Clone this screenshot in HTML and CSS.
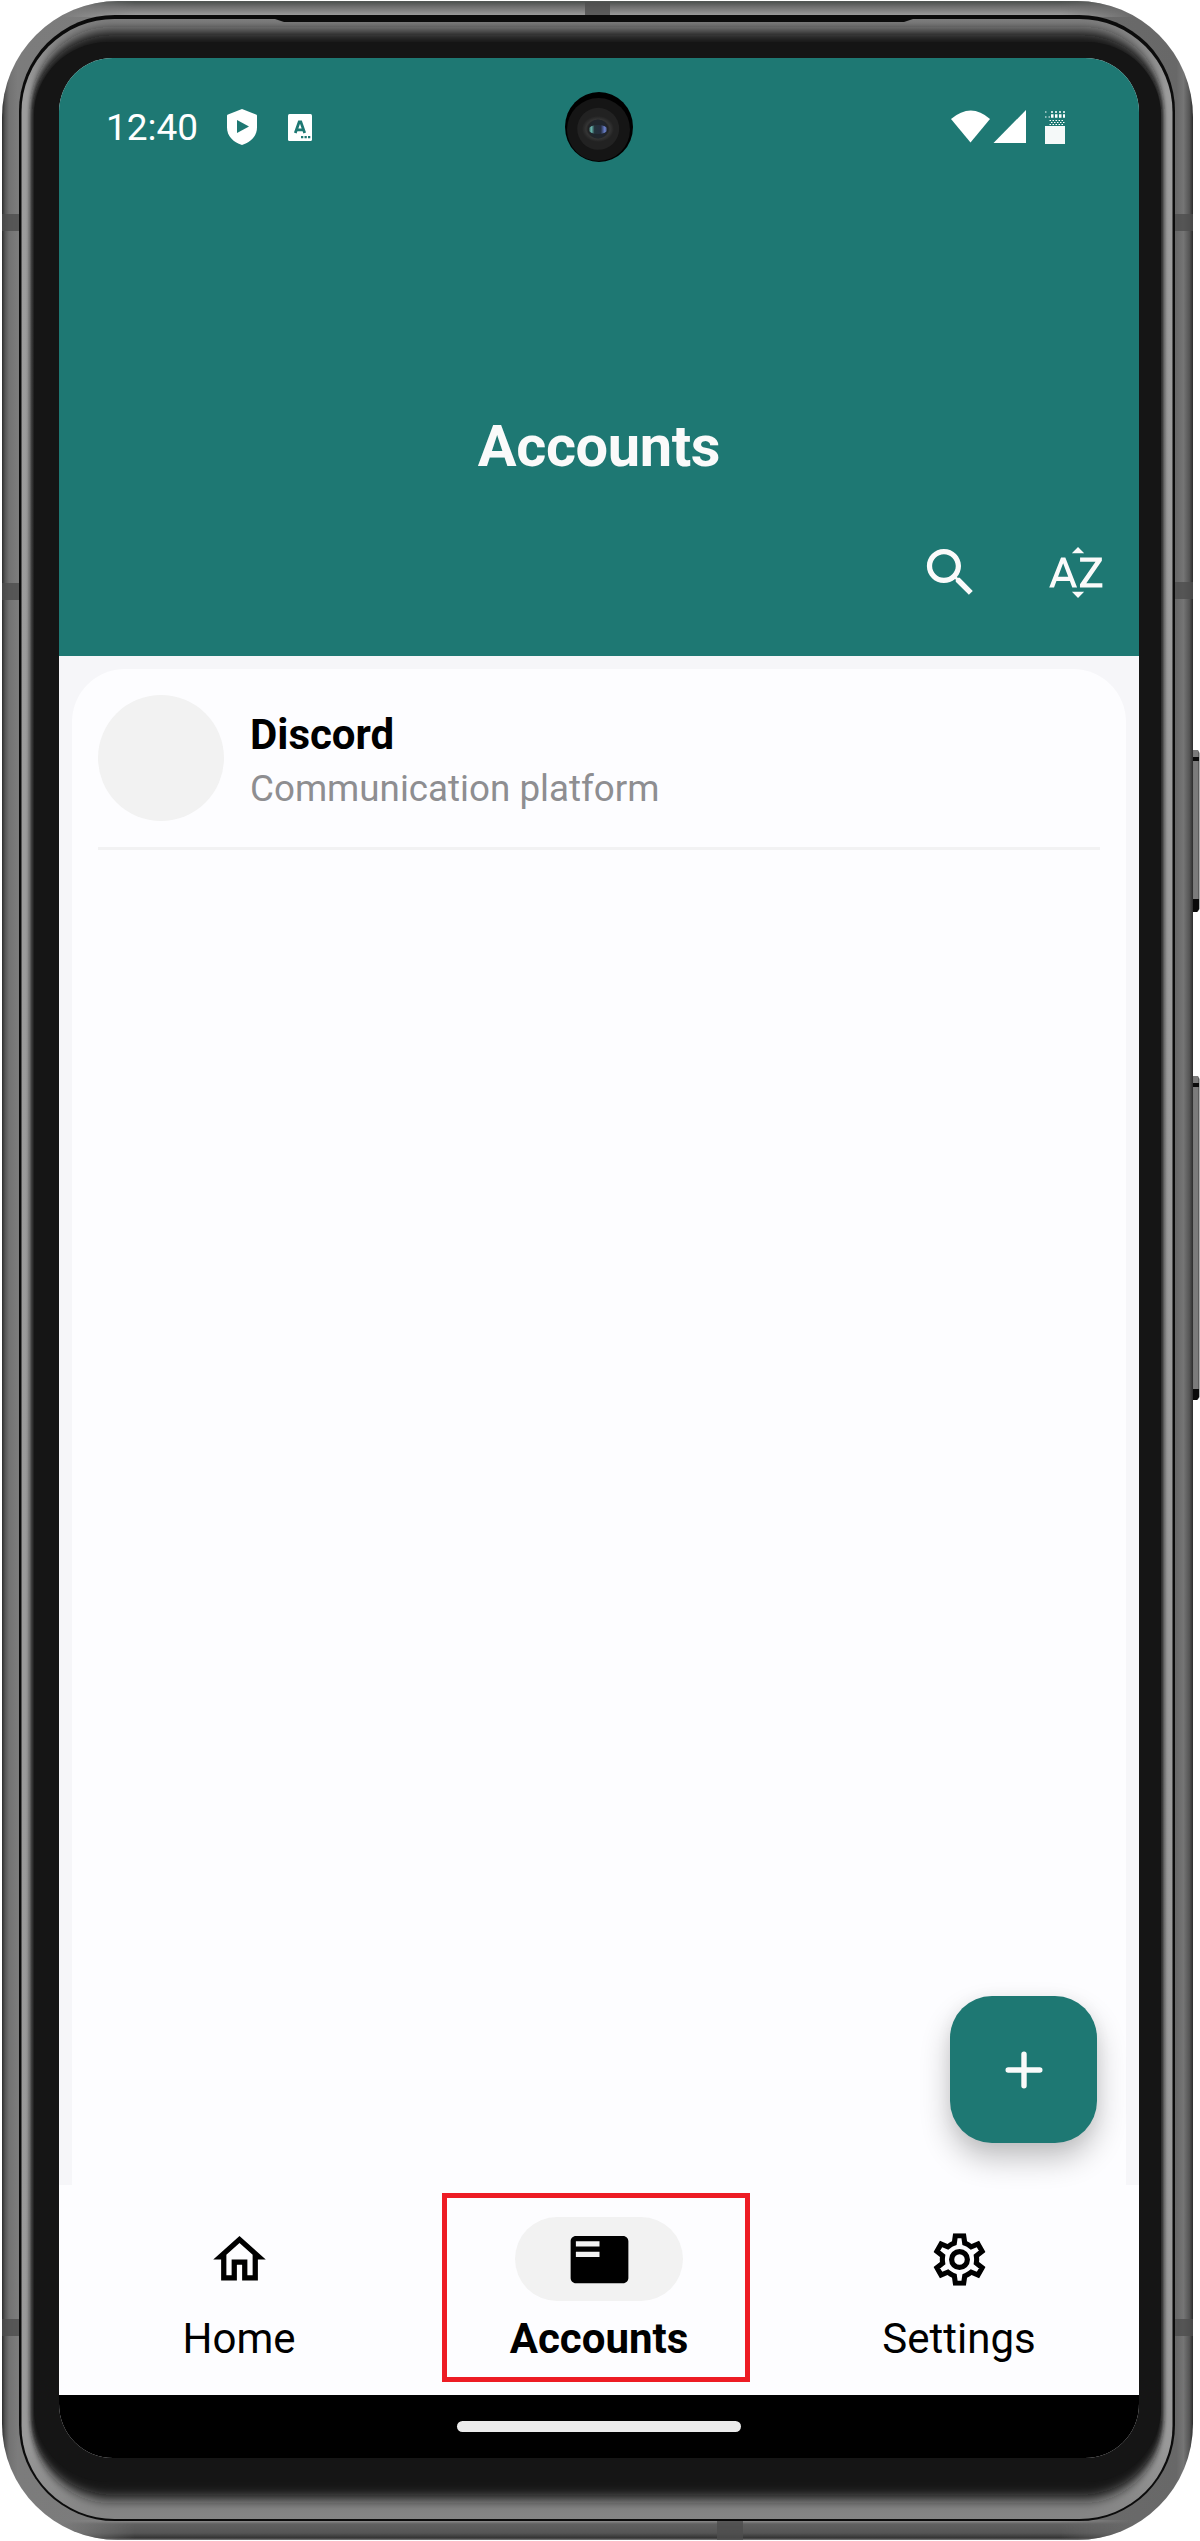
FILE: index.html
```html
<!DOCTYPE html>
<html lang="en">
<head>
<meta charset="utf-8">
<title>Accounts</title>
<link rel="stylesheet" href="styles.css">
</head>
<body>
<div class="device">
  <svg class="device-frame" viewBox="0 0 1200 2541" aria-hidden="true">
    <defs>
      <linearGradient id="bandX" x1="2" x2="1193" y1="0" y2="0" gradientUnits="userSpaceOnUse">
        <stop offset="0" stop-color="#2c2c2c"/><stop offset=".0025" stop-color="#555"/><stop offset=".006" stop-color="#727272"/><stop offset=".013" stop-color="#7c7c7c"/>
        <stop offset=".5" stop-color="#777"/>
        <stop offset=".986" stop-color="#686868"/><stop offset=".992" stop-color="#757575"/><stop offset=".997" stop-color="#555"/><stop offset="1" stop-color="#2c2c2c"/>
      </linearGradient>
      <linearGradient id="bandTop" x1="0" x2="0" y1="0" y2="16" gradientUnits="userSpaceOnUse">
        <stop offset="0" stop-color="#a5aba7"/><stop offset=".1" stop-color="#4c504e"/><stop offset=".4" stop-color="#6c6c6c"/><stop offset="1" stop-color="#a0a0a0"/>
      </linearGradient>
      <linearGradient id="bandBottom" x1="0" x2="0" y1="2521" y2="2541" gradientUnits="userSpaceOnUse">
        <stop offset="0" stop-color="#8a8a8a"/><stop offset=".15" stop-color="#606060"/><stop offset=".6" stop-color="#555"/><stop offset=".85" stop-color="#333"/><stop offset="1" stop-color="#aaa"/>
      </linearGradient>
      <linearGradient id="fade" x1="60" x2="1135" y1="0" y2="0" gradientUnits="userSpaceOnUse">
        <stop offset="0" stop-color="#000"/><stop offset=".07" stop-color="#fff"/><stop offset=".93" stop-color="#fff"/><stop offset="1" stop-color="#000"/>
      </linearGradient>
      <mask id="middle"><rect width="1200" height="2541" fill="url(#fade)"/></mask>
      <linearGradient id="lip" x1="0" x2="0" y1="19" y2="2519" gradientUnits="userSpaceOnUse">
        <stop offset="0" stop-color="#808080"/><stop offset=".03" stop-color="#9c9c9c"/><stop offset=".97" stop-color="#999"/><stop offset="1" stop-color="#848484"/>
      </linearGradient>
      <filter id="soft" x="-5%" y="-5%" width="110%" height="110%"><feGaussianBlur stdDeviation="2.2 6.5"/></filter>
      <clipPath id="body"><rect x="2" y="1" width="1191" height="2539" rx="116"/></clipPath>
      <clipPath id="inner"><rect x="21.500" y="19" width="1151" height="2500" rx="93"/></clipPath>
      <linearGradient id="key" x1="1192" x2="1200" y1="0" y2="0" gradientUnits="userSpaceOnUse">
        <stop offset="0" stop-color="#555"/><stop offset=".2" stop-color="#7b7b7b"/><stop offset=".75" stop-color="#7b7b7b"/><stop offset=".9" stop-color="#333"/><stop offset="1" stop-color="#aaa"/>
      </linearGradient>
    </defs>
    <g class="side-keys">
      <path d="M1190 750h8l1.500 3v156l-2 3h-7.500z" fill="url(#key)"/>
      <path d="M1190 757h9v4h-9zM1190 899h9v10l-2 3h-7z" fill="#0b0b0b"/>
      <path d="M1190 1076h8l1.500 3v318l-2 3h-7.500z" fill="url(#key)"/>
      <path d="M1190 1083h9v4h-9zM1190 1389h9v8l-2 3h-7z" fill="#0b0b0b"/>
    </g>
    <rect x="2" y="1" width="1191" height="2539" rx="116" fill="url(#bandX)"/>
    <g clip-path="url(#body)">
      <g mask="url(#middle)">
        <rect y="0" width="1200" height="17" fill="url(#bandTop)"/>
        <rect y="2520" width="1200" height="21" fill="url(#bandBottom)"/>
      </g>
      <path d="M0 214h20v17H0zM0 583h20v17H0zM0 2319h20v17H0zM1175 214h20v17h-20zM1175 582h20v17h-20zM1175 2319h20v17h-20zM585 2h25v14h-25zM717 2521h26v20h-26z" fill="#4e4e4e" opacity=".8"/>
    </g>
    <rect x="19" y="15" width="1156" height="2506" rx="96" fill="#0b0b0b"/>
    <rect x="21.500" y="19" width="1151" height="2500" rx="93" fill="url(#lip)"/>
    <g clip-path="url(#inner)">
      <rect x="30.500" y="31" width="1133" height="2468" rx="82" fill="#151515" filter="url(#soft)"/>
      <path d="M272 18l12 4h620l12-4z" fill="#0b0b0b"/>
    </g>
    <rect x="34" y="42" width="1127" height="2440" rx="74" fill="#151515"/>
  </svg>

  <main class="screen">
    <header class="app-bar">
      <div class="status-bar">
        <span class="clock">12:40</span>
        <svg class="shield" viewBox="0 0 30 36"><path d="M15 0l14 5.500c1 .4 1 1 1 2v11C30 27 24 33 15 36 6 33 0 27 0 18.500v-11c0-1 0-1.600 1-2z" fill="#fff"/><path d="M10 11v13l12-6.500z" fill="#1e7873"/></svg>
        <svg class="keyboard" viewBox="0 0 24 27"><rect width="24" height="27" rx="1.500" fill="#fff"/><path d="M7.300 19L11.200 7.800h1.600L16.700 19M8.800 15.800h6.400" fill="none" stroke="#1e7873" stroke-width="2.800"/><path d="M13 22h2.300v2.300H13zM16.500 22h2.300v2.300h-2.300zM20 22h2.300v2.300H20z" fill="#1e7873"/></svg>
        <svg class="signals" viewBox="0 0 115 35">
          <path d="M0 9Q20-8 39 9L19.500 32.500z" fill="#fff"/>
          <path d="M75 0v33H42.500z" fill="#fff"/>
          <path d="M94 16h20v18H94z" fill="#f5f9f9"/>
          <path d="M100 2h14" stroke="#fff" stroke-width="1.500" stroke-dasharray="2 2" fill="none"/>
          <path d="M100 6h14" stroke="#fff" stroke-width="3.500" stroke-dasharray="2.500 1.500" fill="none"/>
          <path d="M98.500 10.500h15M100 12.500h14M98.500 14.500h15M94 2h1.500M94 7h1.500M97.500 7h1.500" stroke="#fff" stroke-width="1.200" stroke-dasharray="1.500 1.500" fill="none"/>
        </svg>
      </div>
      <h1 class="title">Accounts</h1>
      <div class="actions">
        <span class="action"><svg class="icon" viewBox="0 0 24 24"><path d="M15.500 14h-.79l-.28-.27C15.410 12.590 16 11.110 16 9.500 16 5.910 13.090 3 9.500 3S3 5.910 3 9.500 5.910 16 9.500 16c1.610 0 3.090-.59 4.230-1.570l.27.28v.79l5 4.990L20.490 19l-4.990-5zm-6 0C7.010 14 5 11.990 5 9.500S7.010 5 9.500 5 14 7.010 14 9.500 11.990 14 9.500 14z"/></svg></span>
        <span class="action"><svg class="icon" viewBox="0 0 24 24"><path d="M14.940 4.660h-4.720l2.360-2.360zm-4.690 14.710h4.660l-2.330 2.330zM6.100 6.270L1.600 17.730h1.840l.92-2.450h5.110l.92 2.450h1.840L7.740 6.270H6.100zm-1.130 7.370l1.940-5.180 1.940 5.180H4.970zm10.760 2.500h6.120v1.590h-8.530v-1.290l5.920-8.560h-5.880v-1.600h8.300v1.260l-5.930 8.600z"/></svg></span>
      </div>
    </header>

    <section class="content">
      <ul class="account-list">
        <li class="account">
          <span class="avatar"></span>
          <div class="account-text">
            <div class="account-name">Discord</div>
            <div class="account-note">Communication platform</div>
          </div>
        </li>
      </ul>
      <button class="fab" aria-label="Add account"><svg viewBox="0 0 38 38"><path d="M19 3.200v31.600M3.200 19h31.600" stroke="#fafafa" stroke-width="5.400" stroke-linecap="round"/></svg></button>
    </section>

    <nav class="nav">
      <a class="nav-item"><span class="pill"><svg class="icon" viewBox="0 0 24 24"><path d="M12 5.690l5 4.500V18h-2v-6H9v6H7v-7.810l5-4.500M12 3L2 12h3v8h6v-6h2v6h6v-8h3L12 3z"/></svg></span><span class="nav-label">Home</span></a>
      <a class="nav-item active"><span class="pill"><svg class="icon" viewBox="0 0 24 24"><path d="M21 3H3c-1.100 0-2 .9-2 2v14c0 1.100.9 2 2 2h18c1.100 0 2-.9 2-2V5c0-1.100-.9-2-2-2zm-9 8H3V9h9v2zm0-4H3V5h9v2z"/></svg></span><span class="nav-label">Accounts</span><span class="highlight"></span></a>
      <a class="nav-item"><span class="pill"><svg class="icon" viewBox="0 0 24 24">
        <defs><path id="gear" d="M19.440 12.990c.04-.33.07-.65.07-.99s-.03-.66-.07-.99l2.450-1.900-2.430-4.220-2.870 1.170c-.52-.4-1.090-.74-1.710-1L14.440 2H9.570l-.44 3.060c-.62.26-1.190.6-1.710 1L4.550 4.890 2.110 9.110l2.450 1.900c-.04.33-.07.65-.07.99s.03.68.07.99l-2.440 1.910 2.430 4.200 2.880-1.150c.53.41 1.100.75 1.720 1L9.580 22h4.850l.45-3.050c.62-.26 1.200-.6 1.720-1l2.880 1.150 2.430-4.200z"/><clipPath id="gearClip"><use href="#gear"/></clipPath></defs>
        <use href="#gear" fill="none" stroke="#000" stroke-width="3.900" clip-path="url(#gearClip)"/><circle cx="12" cy="12" r="3" fill="none" stroke="#000" stroke-width="2"/></svg></span><span class="nav-label">Settings</span></a>
    </nav>
    <div class="gesture-bar"><span class="gesture-handle"></span></div>

    <svg class="camera" viewBox="0 0 68 70" aria-hidden="true">
      <defs>
        <radialGradient id="ring"><stop offset=".55" stop-color="#191919"/><stop offset=".75" stop-color="#343434"/><stop offset="1" stop-color="#222"/></radialGradient>
        <linearGradient id="lens"><stop offset="0" stop-color="#222"/><stop offset=".14" stop-color="#6cbdb5"/><stop offset=".32" stop-color="#23313a"/><stop offset=".65" stop-color="#252c3e"/><stop offset=".87" stop-color="#6f86d6"/><stop offset="1" stop-color="#222"/></linearGradient>
      </defs>
      <ellipse cx="34" cy="35" rx="34" ry="35"/>
      <circle cx="33.500" cy="37.500" r="31.500" fill="#151515"/>
      <circle cx="33.200" cy="36.800" r="21" fill="#222"/>
      <ellipse cx="33" cy="37" rx="16" ry="13" fill="url(#ring)"/>
      <circle cx="33" cy="37" r="9.500" fill="#20252c"/>
      <ellipse cx="33" cy="37.500" rx="9.500" ry="4.500" fill="url(#lens)"/>
    </svg>
  </main>
</div>
</body>
</html>
```
FILE: styles.css
```css
* { box-sizing: border-box; }

body {
  margin: 0;
  background: #fff;
  color: #000;
  font-family: Roboto, "Liberation Sans", sans-serif;
}

.device {
  position: relative;
  width: 1200px;
  height: 2541px;
  padding: 58px 61px 83px 59px;
  overflow: hidden;
}

/* Phone body drawn beneath the screen */
.device-frame {
  position: absolute;
  inset: 0;
  width: 1200px;
  height: 2541px;
}

.screen {
  position: relative;
  display: flex;
  flex-direction: column;
  width: 1080px;
  height: 2400px;
  border-radius: 54px;
  overflow: hidden;
  background: #f6f6f9;
}

.camera {
  position: absolute;
  left: 506px;
  top: 34px;
  width: 68px;
  height: 70px;
}

.app-bar {
  display: flex;
  flex-direction: column;
  height: 598px;
  background: #1e7873;
  color: #fff;
}

.status-bar {
  display: flex;
  align-items: center;
  height: 138px;
  padding: 0 73px 0 47px;
}

.clock {
  width: 121px;
  padding-top: 2px;
  font-size: 37px;
  line-height: 44px;
}

.shield { width: 30px; height: 36px; }
.keyboard { width: 24px; height: 27px; margin-left: 31px; }
.signals { width: 115px; height: 35px; margin-left: auto; }

.title {
  margin: 213px 0 0;
  height: 74px;
  font-size: 57.750px;
  font-weight: 700;
  letter-spacing: -.4px;
  line-height: 74px;
  text-align: center;
  color: #fafafa;
}

.actions {
  display: flex;
  justify-content: flex-end;
  margin-top: 26px;
}

.action {
  display: flex;
  align-items: center;
  justify-content: center;
  width: 126px;
  height: 126px;
}

.icon { width: 63px; height: 63px; fill: currentColor; }
.action .icon { fill: #fafafa; }

.content {
  position: relative;
  height: 1529px;
  padding: 13px 13px 0;
}

.account-list {
  height: 1516px;
  margin: 0;
  padding: 26px 26px 0;
  border-radius: 53px 53px 0 0;
  background: #fdfdff;
  list-style: none;
}

.account {
  display: flex;
  gap: 26px;
  height: 155px;
  border-bottom: 3px solid #f2f2f3;
}

.avatar {
  width: 126px;
  height: 126px;
  border-radius: 50%;
  background: #f2f2f2;
}

.account-name {
  margin-top: 8px;
  font-size: 42px;
  font-weight: 700;
  line-height: 63px;
}

.account-note {
  font-size: 36.750px;
  line-height: 46px;
  color: #8e8e91;
}

.fab {
  position: absolute;
  right: 42px;
  bottom: 42px;
  display: flex;
  align-items: center;
  justify-content: center;
  width: 147px;
  height: 147px;
  padding: 0;
  border: 0;
  border-radius: 42px;
  background: #1e7873;
  box-shadow: 0 16px 30px rgba(0, 0, 0, .24), 0 2px 16px rgba(0, 0, 0, .05);
}

.fab svg { width: 38px; height: 38px; }

.nav {
  display: flex;
  height: 210px;
  background: #fdfdff;
}

/* The button's shadow falls across the top of the navigation */
.content { z-index: 1; }

.nav-item {
  position: relative;
  display: flex;
  flex: 1;
  flex-direction: column;
  align-items: center;
  padding-top: 32px;
}

.pill {
  display: flex;
  align-items: center;
  justify-content: center;
  width: 168px;
  height: 84px;
  border-radius: 42px;
}

.active .pill { background: #f2f2f2; }

.nav-label {
  margin-top: 11px;
  font-size: 42px;
  line-height: 54px;
}

.active .nav-label { font-weight: 700; }

/* Outline laid over the selected tab */
.highlight {
  position: absolute;
  left: 23px;
  top: 8px;
  width: 308px;
  height: 189px;
  border: 5px solid #ed1c24;
}

.gesture-bar {
  display: flex;
  align-items: center;
  justify-content: center;
  height: 63px;
  background: #000;
}

.gesture-handle {
  width: 284px;
  height: 11px;
  border-radius: 6px;
  background: #ebebeb;
}
```
